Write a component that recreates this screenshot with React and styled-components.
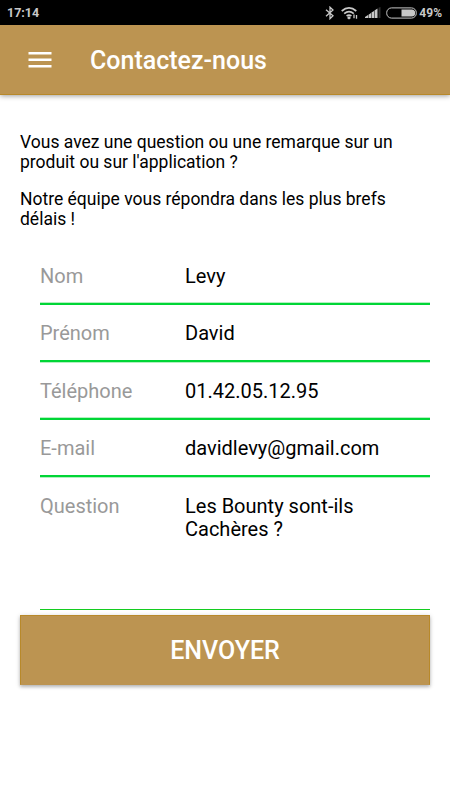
import React from "react";
import styled, { createGlobalStyle } from "styled-components";

const GlobalStyle = createGlobalStyle`
  * { box-sizing: border-box; }
  body { margin: 0; background: #fff; font-family: Roboto, "Noto Sans", sans-serif; }
`;

const Screen = styled.div`
  width: 450px;
  height: 800px;
  display: flex;
  flex-direction: column;
  background: #fff;
  color: #000;
  overflow: hidden;
`;

const StatusBar = styled.div`
  height: 25px;
  flex: none;
  display: flex;
  align-items: center;
  justify-content: space-between;
  padding: 0 8px 0 7px;
  background: #000;
  color: #c8c8c8;
  font-size: 12px;
  font-weight: 700;
  line-height: 25px;
`;

const Clock = styled.span`
  font-size: 12.5px;
`;

const StatusIcons = styled.div`
  display: flex;
  align-items: center;
  height: 25px;
  svg { display: block; }
`;

const Battery = styled.span`
  width: 25px;
  padding-top: 1px;
  white-space: nowrap;
  display: flex;
  justify-content: flex-end;
`;

const Header = styled.header`
  height: 70px;
  flex: none;
  display: flex;
  align-items: center;
  padding-left: 28px;
  background: #bc9451;
  border-bottom: 1px solid #b8892a;
  box-shadow: 0 1px 5px rgba(0, 0, 0, 0.38);
`;

const MenuButton = styled.button`
  width: 24px;
  height: 16px;
  margin: 0 38px 0 0;
  padding: 0;
  border: 0;
  background: none;
  svg { display: block; }
`;

const Title = styled.h1`
  margin: 3px 0 0;
  color: #fff;
  font-size: 25px;
  font-weight: 500;
  line-height: 30px;
`;

const Intro = styled.section`
  padding: 37px 20px 0;
`;

const Paragraph = styled.p`
  margin: 0 0 17px;
  font-size: 17.5px;
  line-height: 20px;
`;

const Form = styled.form`
  display: flex;
  flex-direction: column;
  padding: 1px 20px 0 40px;
`;

const Field = styled.div`
  height: ${(p) => p.$height}px;
  display: flex;
  flex-direction: row;
  padding-top: ${(p) => p.$top}px;
  font-size: 20px;
  line-height: 23px;
`;

const Label = styled.span`
  width: 145px;
  flex: none;
  color: #999;
`;

const Value = styled.span`
  width: 225px;
`;

const Underline = styled.div`
  height: 3px;
  flex: none;
  background: #00d636;
  border: 0 solid #b3f0c0;
  border-width: ${(p) => (p.$softTop ? "1px 0 0" : "0 0 1px")};
`;

const ThinUnderline = styled.div`
  height: 1px;
  background: #14cc20;
`;

const Submit = styled.button`
  width: 410px;
  height: 70px;
  flex: none;
  margin: 5px 0 0 20px;
  padding: 2px 0 0;
  border: 1px solid #b8892a;
  border-bottom-color: #bc9451;
  background: #bc9451;
  box-shadow: 0 2px 3px rgba(0, 0, 0, 0.2), 0 1px 5px rgba(0, 0, 0, 0.16);
  color: #fff;
  font-family: inherit;
  font-size: 25px;
  font-weight: 500;
  line-height: 30px;
`;

const rows = [
  { label: "Nom", value: "Levy", height: 55, top: 18, softTop: true },
  { label: "Prénom", value: "David", height: 55, top: 17, softTop: false },
  { label: "Téléphone", value: "01.42.05.12.95", height: 54, top: 17, softTop: true },
  { label: "E-mail", value: "davidlevy@gmail.com", height: 55, top: 17, softTop: false },
];

const BluetoothIcon = () => (
  <svg width="10" height="14" viewBox="0 0 10 14" fill="none" stroke="#c8c8c8" strokeWidth="1.3">
    <path d="M1 3.7 8 9.8 5 12.7V1.2l3 2.9L1 10.3" />
  </svg>
);

const WifiIcon = () => (
  <svg width="18" height="14" viewBox="0 0 18 14" fill="none" stroke="#c8c8c8" strokeWidth="1.7">
    <path d="M.7 5Q8 -1.3 15.3 5M3.2 7.6Q8 3.6 12.8 7.6M5.6 10Q8 8.2 10.4 10" />
    <path d="M8 10 10 12 8 13.5 6 12Z" fill="#c8c8c8" stroke="none" />
    <path d="M13 8.5v3.7M15.5 9v3.7" strokeWidth="1.3" />
  </svg>
);

const SignalIcon = () => (
  <svg width="16" height="12" viewBox="0 0 16 12">
    <path d="M0 11V10L3 8v3ZM3.5 11V7.7L6 6v5ZM6.5 11V5.6L9 4v7ZM9.5 11V3.5L12.5 1.5V11Z" fill="#c8c8c8" />
    <path d="M13.5 11V.8L15.5 0V11Z" fill="#303030" />
  </svg>
);

const BatteryIcon = () => (
  <svg width="31" height="12" viewBox="0 0 31 12">
    <rect x=".7" y=".9" width="29.6" height="10.2" rx="4.8" fill="none" stroke="#c8c8c8" strokeWidth="1" />
    <path d="M15.5 2.5h10.2a3.5 3.5 0 0 1 0 7H15.5Z" fill="#c8c8c8" />
  </svg>
);

const IconSlot = styled.span`
  display: block;
  margin-right: ${(p) => p.$gap}px;
`;

export default function App() {
  return (
    <Screen>
      <GlobalStyle />
      <StatusBar>
        <Clock>17:14</Clock>
        <StatusIcons>
          <IconSlot $gap={6}><BluetoothIcon /></IconSlot>
          <IconSlot $gap={6}><WifiIcon /></IconSlot>
          <IconSlot $gap={5}><SignalIcon /></IconSlot>
          <IconSlot $gap={0}><BatteryIcon /></IconSlot>
          <Battery>49%</Battery>
        </StatusIcons>
      </StatusBar>
      <Header>
        <MenuButton type="button" aria-label="Menu">
          <svg width="24" height="16" viewBox="0 0 24 16">
            <path d="M.5 0h23v2.5H.5ZM.5 6.5h23V9H.5ZM.5 13h23v2.5H.5Z" fill="#fff" />
          </svg>
        </MenuButton>
        <Title>Contactez-nous</Title>
      </Header>
      <Intro>
        <Paragraph>
          Vous avez une question ou une remarque sur un<br />produit ou sur l'application ?
        </Paragraph>
        <Paragraph>
          Notre équipe vous répondra dans les plus brefs<br />délais !
        </Paragraph>
      </Intro>
      <Form>
        {rows.map((r) => (
          <React.Fragment key={r.label}>
            <Field $height={r.height} $top={r.top}>
              <Label>{r.label}</Label>
              <Value>{r.value}</Value>
            </Field>
            <Underline $softTop={r.softTop} />
          </React.Fragment>
        ))}
        <Field $height={131} $top={17}>
          <Label>Question</Label>
          <Value>Les Bounty sont-ils<br />Cachères ?</Value>
        </Field>
        <ThinUnderline />
      </Form>
      <Submit type="button">ENVOYER</Submit>
    </Screen>
  );
}
